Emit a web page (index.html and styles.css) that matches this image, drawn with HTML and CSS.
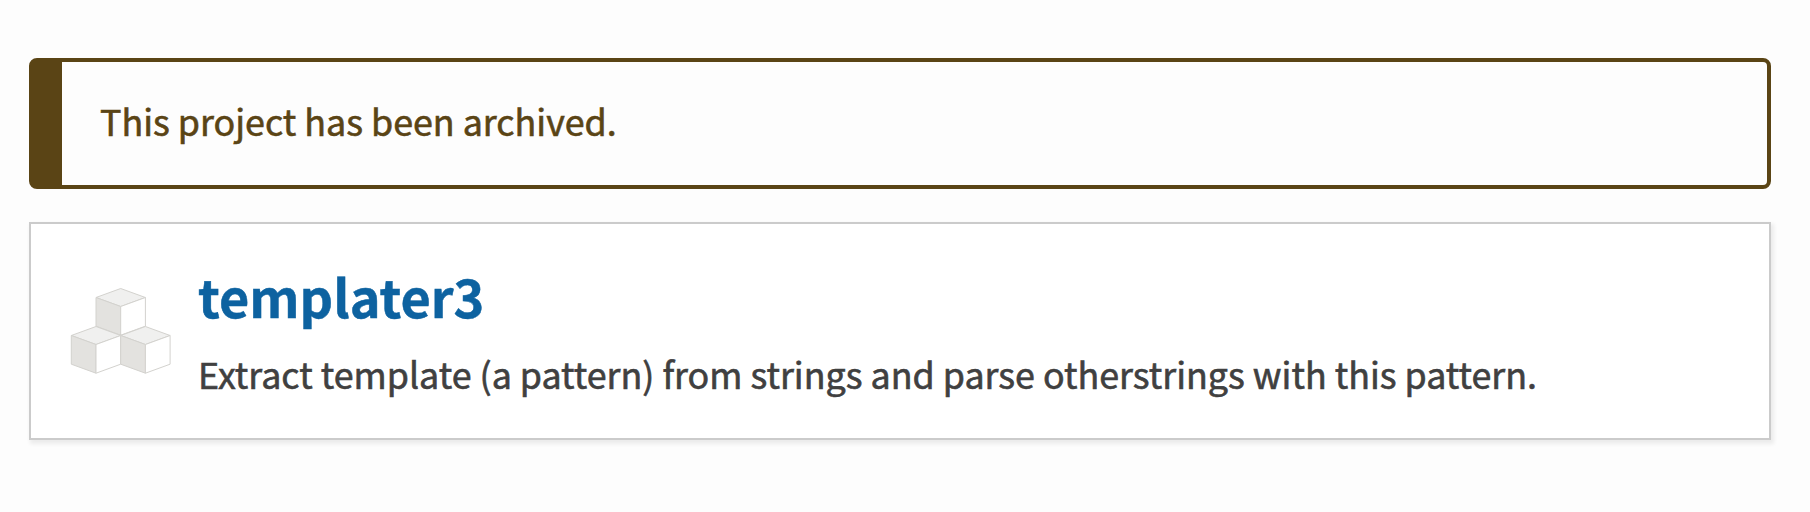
FILE: index.html
```
<!DOCTYPE html>
<html lang="en">
<head>
<meta charset="utf-8">
<title>templater3</title>
<link rel="stylesheet" href="styles.css">
</head>
<body>
<main class="page">
<div class="notice"><p class="notice-text">This project has been archived.</p></div>
<article class="card">
<svg class="cubes" viewBox="0 0 102 88" aria-hidden="true">
<g stroke="#d3d2ce" stroke-width="1" stroke-linejoin="round">
<g id="cube"><path fill="#f0f0ef" d="M26 10.5 50.7 1.5 75.4 10.5 50.7 19.5Z"/><path fill="#e3e2df" d="M26 10.5 50.7 19.5V48.2L26 39.2Z"/><path fill="#fff" d="M50.7 19.5 75.4 10.5V39.2L50.7 48.2Z"/></g>
<use href="#cube" x="-24.7" y="38"/><use href="#cube" x="24.7" y="38"/>
</g>
</svg>
<div class="info">
<h3 class="name">templater3</h3>
<p class="description">Extract template (a pattern) from strings and parse otherstrings with this pattern.</p>
</div>
</article>
</main>
</body>
</html>
```
FILE: styles.css
```
* { box-sizing: border-box; }
body { margin: 0; min-height: 512px; background: #fdfdfd; font-family: "Noto Sans CJK SC", "Source Sans 3", sans-serif; }
.page { padding: 58px 39px 72px 29px; }
.notice { height: 131px; border: 4px solid #5a4415; border-left-width: 33px; border-radius: 8px; padding: 0 38px 8px; display: flex; align-items: center; }
.notice-text { margin: 0; color: #5a4415; font-size: 35.82px; line-height: 60px; -webkit-text-stroke: 0.6px; }
.card { margin-top: 33px; height: 218px; background: #fff; border: 2px solid #cbcbcb; box-shadow: 2px 3px 4px 1px rgba(0,0,0,.07); display: flex; padding: 38px 39px 0; }
.cubes { width: 102px; height: 88px; margin-top: 25px; flex: none; }
.info { margin-left: 26px; white-space: nowrap; }
.name { margin: 0; color: #0d62a0; font-size: 52.2px; line-height: 66px; font-weight: 700; -webkit-text-stroke: 0.5px; }
.description { margin: 15px 0 0; color: #404040; font-size: 35.82px; line-height: 60px; -webkit-text-stroke: 0.6px; }
```
